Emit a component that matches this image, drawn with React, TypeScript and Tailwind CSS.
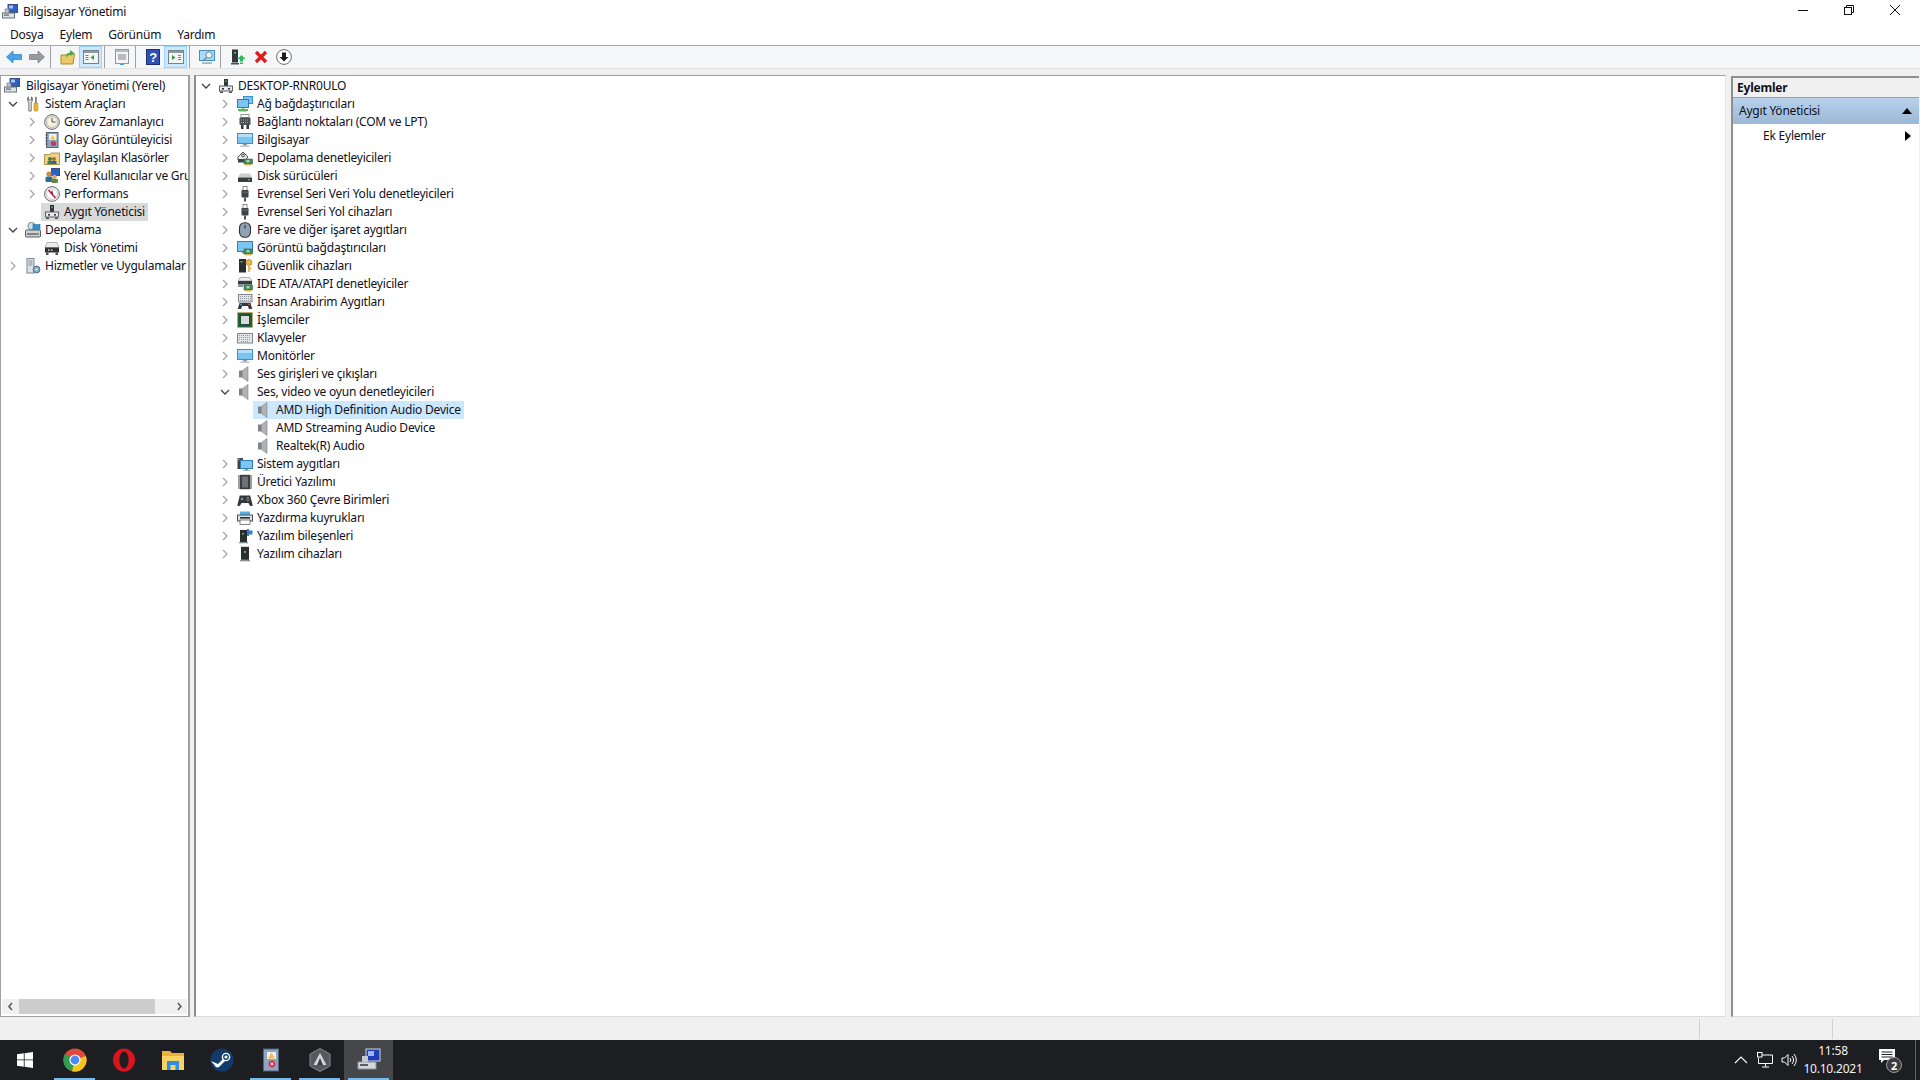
import type { ReactNode } from 'react'

const Ico = ({ children, size = 16 }: { children: ReactNode; size?: number }) => (
  <svg width={size} height={size} viewBox="0 0 16 16" className="shrink-0" shapeRendering="geometricPrecision">
    {children}
  </svg>
)

const Monitor = () => (
  <>
    <rect x="0.5" y="1.5" width="15" height="10" fill="#7cc4f2" stroke="#3f8fc9" />
    <rect x="1" y="2" width="14" height="3" fill="#b5e0fa" />
    <rect x="6" y="12" width="4" height="1.5" fill="#8b98a5" />
    <rect x="3.5" y="13.5" width="9" height="1.2" fill="#aab4bd" />
  </>
)

const Tower = () => (
  <>
    <rect x="6" y="1" width="4" height="7" fill="#33373b" />
    <rect x="7.4" y="2.5" width="1.4" height="1.4" fill="#4bd14b" />
    <rect x="1.5" y="8" width="13" height="5" fill="#e9ebed" stroke="#5c6165" />
    <rect x="4" y="10" width="2" height="1.6" fill="#33373b" />
    <rect x="10" y="10" width="2" height="1.6" fill="#33373b" />
    <rect x="2" y="13.5" width="3" height="1.5" fill="#4b4f53" />
    <rect x="11" y="13.5" width="3" height="1.5" fill="#4b4f53" />
  </>
)

const Card = () => (
  <>
    <rect x="7" y="9" width="8.5" height="5" fill="#3f8a5e" stroke="#2b6a46" strokeWidth="0.6" />
    <rect x="9.5" y="10" width="3" height="2.4" fill="#a8d3b6" />
    <rect x="8" y="14" width="6" height="1.4" fill="#e2b33c" />
  </>
)

const DiskBody = () => (
  <>
    <path d="M3 5.5 L13 5.5 L15 9.5 L1 9.5 Z" fill="#c9ccd0" />
    <rect x="1" y="9.5" width="14" height="4.5" rx="0.6" fill="#3a3d40" />
    <rect x="11" y="11.2" width="2" height="1.2" fill="#4bd14b" />
  </>
)

const Usb = () => (
  <>
    <rect x="6" y="0.5" width="4" height="4" fill="#fff" stroke="#6b7075" strokeWidth="0.8" />
    <rect x="4.5" y="4" width="7" height="7.5" rx="0.8" fill="#3e4246" />
    <rect x="4.5" y="5.5" width="7" height="1.2" fill="#62676c" />
    <rect x="7" y="11.5" width="2" height="4" fill="#4b4f53" />
  </>
)

const Speaker = () => (
  <>
    <rect x="2" y="4.5" width="3.5" height="7" fill="#7f8388" />
    <path d="M5.5 4.5 L11 0.5 L11 15.5 L5.5 11.5 Z" fill="#b0b3b6" stroke="#7d8186" strokeWidth="0.6" />
  </>
)

const Keyboard = () => (
  <>
    <rect x="0.5" y="3.5" width="15" height="9.5" fill="#e4e7ea" stroke="#7f858b" />
    <path d="M2 5.5h12M2 7.5h12M2 9.5h12M4 11.5h8" stroke="#8d939a" strokeWidth="1" strokeDasharray="1 1" />
  </>
)

const icons: Record<string, ReactNode> = {
  mgmt: (
    <>
      <rect x="6" y="0.5" width="9.5" height="8" fill="#2f5fc4" stroke="#3a4f80" />
      <rect x="7" y="1.5" width="4" height="3" fill="#a9c6f4" />
      <rect x="0.5" y="9" width="12" height="5" fill="#dfe2e5" stroke="#6d7277" />
      <rect x="3" y="5" width="4" height="4" fill="#bfc3c8" stroke="#6d7277" strokeWidth="0.6" />
      <rect x="2" y="10.5" width="5" height="1.2" fill="#5a5f64" />
    </>
  ),
  tools: (
    <>
      <path d="M3.5 0.8 V4 H6.5 V0.8 C8 2 8 5 6.2 6.2 V15 H3.8 V6.2 C2 5 2 2 3.5 0.8 Z" fill="#eceef0" stroke="#5f6468" strokeWidth="0.9" />
      <rect x="10" y="0.8" width="1.8" height="6.5" fill="#7d8388" />
      <rect x="9" y="7" width="3.8" height="8" rx="1" fill="#f0b429" stroke="#a97c14" strokeWidth="0.6" />
    </>
  ),
  clock: (
    <>
      <circle cx="8" cy="8" r="7.4" fill="#dfe0e2" stroke="#6d7176" />
      <circle cx="8" cy="8" r="5.4" fill="#f7f1de" stroke="#a9a38f" strokeWidth="0.6" />
      <path d="M8 4 V8 H11.5" fill="none" stroke="#4a4f54" strokeWidth="1" />
    </>
  ),
  log: (
    <>
      <rect x="2.5" y="0.5" width="11.5" height="15" fill="#8fa4bf" stroke="#56657a" />
      <rect x="5" y="2" width="7.5" height="6" fill="#eef1f5" />
      <path d="M8.7 3 L11 7.5 H6.4 Z" fill="#f0c22e" />
      <circle cx="9.5" cy="11.5" r="2.6" fill="#d8344a" />
      <path d="M1.5 3h2M1.5 6h2M1.5 9h2M1.5 12h2" stroke="#3e4246" />
    </>
  ),
  shared: (
    <>
      <path d="M0.5 4.5 H6 L7 3 H15.5 V14.5 H0.5 Z" fill="#ecd38c" stroke="#b39545" />
      <circle cx="6" cy="9" r="2" fill="#3a7f4f" />
      <rect x="3.5" y="11" width="5" height="3" fill="#3a7f4f" />
      <circle cx="10" cy="9" r="2" fill="#b06a32" />
      <rect x="8" y="11" width="4.5" height="3" fill="#2e5fa8" />
    </>
  ),
  users: (
    <>
      <rect x="7.5" y="0.5" width="8" height="7" fill="#2f5fc4" stroke="#3a4f80" />
      <circle cx="5" cy="6" r="2.6" fill="#c98a4a" />
      <rect x="1.5" y="8.5" width="7" height="5.5" rx="1.5" fill="#2f6d92" />
      <circle cx="10.5" cy="9" r="2.3" fill="#e0a86b" />
      <rect x="7.5" y="11" width="6.5" height="4" rx="1.2" fill="#5b8a3c" />
    </>
  ),
  perf: (
    <>
      <circle cx="8" cy="8" r="7.4" fill="#f3f3f3" stroke="#5f6468" />
      <circle cx="8" cy="8" r="5.4" fill="#fff" stroke="#a9adb1" strokeWidth="0.6" />
      <path d="M4.5 4 L11.5 12" stroke="#d9243a" strokeWidth="1.8" />
      <path d="M8 3.5 L6.8 8 L9.2 8 Z" fill="#3e4246" />
    </>
  ),
  tower: <Tower />,
  storage: (
    <>
      <circle cx="6.5" cy="4" r="3.6" fill="#cfe0e8" stroke="#6d8a99" />
      <rect x="8" y="2.5" width="7" height="5" fill="#2f8fd0" stroke="#2a6d9c" strokeWidth="0.6" />
      <rect x="0.5" y="8" width="15" height="7" rx="0.8" fill="#cfd2d5" stroke="#5a5f64" />
      <rect x="2" y="11" width="12" height="2" fill="#7e8388" />
      <rect x="11.5" y="11.4" width="1.6" height="1.1" fill="#4bd14b" />
    </>
  ),
  diskmgmt: (
    <>
      <path d="M3 2.5 H13 L15 7.5 H1 Z" fill="#eceef0" stroke="#7f858b" strokeWidth="0.6" />
      <rect x="1" y="7.5" width="14" height="5" fill="#2f3235" />
      <rect x="4" y="9.5" width="1.5" height="1.2" fill="#fff" />
      <rect x="7" y="9.5" width="1.5" height="1.2" fill="#fff" />
      <rect x="2" y="12.5" width="2.5" height="2.5" fill="#4b4f53" />
      <rect x="11.5" y="12.5" width="2.5" height="2.5" fill="#4b4f53" />
    </>
  ),
  services: (
    <>
      <rect x="2" y="0.5" width="7" height="14.5" fill="#dfe3e8" stroke="#7b8794" />
      <path d="M3.5 3h4M3.5 5h4M3.5 7h4" stroke="#7b8794" />
      <circle cx="11.5" cy="11.5" r="3.4" fill="#7fa9c9" stroke="#45708f" />
      <circle cx="11.5" cy="11.5" r="1.1" fill="#fff" />
    </>
  ),
  network: (
    <>
      <rect x="6.5" y="0.5" width="9" height="7" fill="#7cc4f2" stroke="#3f8fc9" />
      <rect x="0.5" y="3.5" width="11" height="8" fill="#7cc4f2" stroke="#2f7db5" />
      <path d="M6 11.5 L10 15.5 H2 Z" fill="#5cb85c" />
      <rect x="1" y="13" width="10" height="2" fill="#5cb85c" />
    </>
  ),
  port: (
    <>
      <rect x="4" y="0.5" width="8" height="3" fill="#fff" stroke="#6b7075" strokeWidth="0.7" />
      <rect x="2.5" y="3.5" width="11" height="7.5" rx="1" fill="#4b4f53" />
      <path d="M4 6h8M4 8.5h8" stroke="#9ea3a8" strokeDasharray="1 1" />
      <rect x="4" y="11" width="2.5" height="4" fill="#34373a" />
      <rect x="9.5" y="11" width="2.5" height="4" fill="#34373a" />
    </>
  ),
  pc: <Monitor />,
  storagectl: (
    <>
      <path d="M1 7 L6 2 L11 7 L8 10 H1 Z" fill="#eceef0" stroke="#3e4246" strokeWidth="0.9" />
      <circle cx="6" cy="5.5" r="1.4" fill="none" stroke="#3e4246" />
      <rect x="1" y="9" width="6" height="3.5" fill="#3e4246" />
      <Card />
    </>
  ),
  disk: <DiskBody />,
  usb: <Usb />,
  mouse: (
    <>
      <rect x="2.5" y="0.7" width="11" height="14.6" rx="5" fill="#8fa3b5" stroke="#2f3235" strokeWidth="1.1" />
      <rect x="7.3" y="3" width="1.4" height="3.5" rx="0.7" fill="#3e4246" />
    </>
  ),
  display: (
    <>
      <rect x="0.5" y="1.5" width="15" height="10" fill="#7cc4f2" stroke="#2f7db5" />
      <rect x="5" y="12" width="4" height="1.5" fill="#8b98a5" />
      <Card />
    </>
  ),
  security: (
    <>
      <rect x="2" y="1" width="7" height="13.5" fill="#2c2f32" />
      <rect x="3.5" y="3" width="2" height="1.4" fill="#4bd14b" />
      <circle cx="12" cy="4.5" r="3" fill="#e9b949" stroke="#b5872a" strokeWidth="0.7" />
      <rect x="11.2" y="7" width="1.6" height="7" fill="#e0ab38" />
      <rect x="12.8" y="10" width="1.5" height="1.2" fill="#e0ab38" />
    </>
  ),
  ide: (
    <>
      <path d="M3 1.5 H13 L15 5 H1 Z" fill="#eceef0" stroke="#7f858b" strokeWidth="0.6" />
      <rect x="1" y="5" width="14" height="3.5" fill="#3a3d40" />
      <rect x="1" y="8.5" width="5" height="2.5" fill="#8a8f94" />
      <Card />
    </>
  ),
  hid: (
    <>
      <rect x="1.5" y="0.5" width="13.5" height="7.5" fill="#e4e7ea" stroke="#7f858b" />
      <path d="M3 2.5h11M3 4.5h11M3 6.5h11" stroke="#8d939a" strokeDasharray="1 1" />
      <path d="M0.8 15 L2.5 9 H13.5 L15.2 15 H12 L10.8 12 H5.2 L4 15 Z" fill="#34383c" />
      <circle cx="4" cy="10.5" r="0.9" fill="#5aa3e0" />
      <circle cx="12" cy="10.5" r="0.9" fill="#d9534f" />
    </>
  ),
  cpu: (
    <>
      <rect x="0.5" y="0.5" width="15" height="15" fill="#295f3f" stroke="#d7b24a" strokeDasharray="1 1" />
      <rect x="2.5" y="2.5" width="11" height="11" fill="#1f4d32" />
      <rect x="4" y="4" width="8" height="8" fill="#d7dbd9" />
    </>
  ),
  keyboard: <Keyboard />,
  monitor: <Monitor />,
  speaker: <Speaker />,
  system: (
    <>
      <path d="M0.5 2 H6 V5 H0.5 Z" fill="#4b4f53" />
      <rect x="1" y="2.8" width="1.4" height="1.2" fill="#4bd14b" />
      <rect x="0.5" y="5" width="3" height="8" fill="#3e4246" />
      <rect x="3.5" y="4.5" width="12" height="8" fill="#7cc4f2" stroke="#2f7db5" />
      <rect x="8" y="13" width="3" height="1" fill="#8b98a5" />
      <rect x="6" y="14" width="7" height="1" fill="#aab4bd" />
    </>
  ),
  firmware: (
    <>
      <rect x="3" y="0.8" width="10" height="14.4" fill="#3b3e41" />
      <path d="M1 2h2M1 4h2M1 6h2M1 8h2M1 10h2M1 12h2M1 14h2M13 2h2M13 4h2M13 6h2M13 8h2M13 10h2M13 12h2M13 14h2" stroke="#3b3e41" />
      <rect x="5" y="2.5" width="6" height="11" fill="#6d7175" />
    </>
  ),
  gamepad: (
    <>
      <path d="M0.3 13.5 L2.8 3.5 H13.2 L15.7 13.5 C14.2 14.8 12.5 14 11.5 11 H4.5 C3.5 14 1.8 14.8 0.3 13.5 Z" fill="#33373b" />
      <circle cx="5" cy="7" r="1.3" fill="#8a8f94" />
      <circle cx="11" cy="5.8" r="0.8" fill="#e0c040" />
      <circle cx="12.2" cy="7.3" r="0.8" fill="#d9534f" />
      <circle cx="9.8" cy="7.3" r="0.8" fill="#4a90d9" />
      <circle cx="11" cy="8.7" r="0.8" fill="#5cb85c" />
    </>
  ),
  printer: (
    <>
      <rect x="3" y="1.5" width="10" height="3.5" fill="#52b0e6" />
      <rect x="0.5" y="5" width="15" height="6" fill="#dfe2e5" stroke="#4b4f53" />
      <rect x="3" y="7" width="10" height="1.6" fill="#2c2f32" />
      <rect x="3" y="10" width="10" height="4.5" fill="#fff" stroke="#4b4f53" strokeWidth="0.7" />
    </>
  ),
  softcomp: (
    <>
      <rect x="3" y="2" width="7" height="12" fill="#2c2f32" />
      <rect x="5" y="5" width="1.8" height="1.6" fill="#4bd14b" />
      <rect x="2" y="14" width="9" height="1.3" fill="#8a8f94" />
      <path d="M10 1 H12 V2.5 H15.5 V6.5 H12 V8 H10 Z" fill="#2f7fd0" />
    </>
  ),
  softdev: (
    <>
      <rect x="4" y="0.8" width="8" height="13" fill="#2c2f32" />
      <rect x="7" y="5" width="2" height="1.8" fill="#4bd14b" />
      <rect x="3" y="14" width="10" height="1.3" fill="#8a8f94" />
    </>
  ),
}

const Chevron = ({ open }: { open?: boolean }) => (
  <svg width="10" height="10" viewBox="0 0 10 10" className="ml-[5px]">
    {open ? (
      <path d="M1 3 L5 7 L9 3" fill="none" stroke="#404040" strokeWidth="1.3" />
    ) : (
      <path d="M3 1 L7 5 L3 9" fill="none" stroke="#a6a6a6" strokeWidth="1.3" />
    )}
  </svg>
)

type RowProps = {
  label: string
  icon: string
  indent: string
  chevron?: 'open' | 'closed'
  selected?: string
}

function TreeRow({ label, icon, indent, chevron, selected }: RowProps) {
  return (
    <div className={`flex items-center h-[18px] whitespace-nowrap ${indent}`}>
      <div className="w-[22px] shrink-0 flex items-center">
        {chevron && <Chevron open={chevron === 'open'} />}
      </div>
      <div className={`flex items-center h-[18px] -ml-[3px] pl-[3px] pr-[3px] ${selected ?? ''}`}>
        <Ico>{icons[icon]}</Ico>
        <span className="ml-[4px]">{label}</span>
      </div>
    </div>
  )
}

const leftTree: RowProps[] = [
  { label: 'Sistem Araçları', icon: 'tools', indent: 'pl-[2px]', chevron: 'open' },
  { label: 'Görev Zamanlayıcı', icon: 'clock', indent: 'pl-[21px]', chevron: 'closed' },
  { label: 'Olay Görüntüleyicisi', icon: 'log', indent: 'pl-[21px]', chevron: 'closed' },
  { label: 'Paylaşılan Klasörler', icon: 'shared', indent: 'pl-[21px]', chevron: 'closed' },
  { label: 'Yerel Kullanıcılar ve Gruplar', icon: 'users', indent: 'pl-[21px]', chevron: 'closed' },
  { label: 'Performans', icon: 'perf', indent: 'pl-[21px]', chevron: 'closed' },
  { label: 'Aygıt Yöneticisi', icon: 'tower', indent: 'pl-[21px]', selected: 'bg-[#d9d9d9]' },
  { label: 'Depolama', icon: 'storage', indent: 'pl-[2px]', chevron: 'open' },
  { label: 'Disk Yönetimi', icon: 'diskmgmt', indent: 'pl-[21px]' },
  { label: 'Hizmetler ve Uygulamalar', icon: 'services', indent: 'pl-[2px]', chevron: 'closed' },
]

const d1 = 'pl-[19px]'
const d2 = 'pl-[38px]'

const deviceTree: RowProps[] = [
  { label: 'DESKTOP-RNR0ULO', icon: 'tower', indent: 'pl-[0px]', chevron: 'open' },
  { label: 'Ağ bağdaştırıcıları', icon: 'network', indent: d1, chevron: 'closed' },
  { label: 'Bağlantı noktaları (COM ve LPT)', icon: 'port', indent: d1, chevron: 'closed' },
  { label: 'Bilgisayar', icon: 'pc', indent: d1, chevron: 'closed' },
  { label: 'Depolama denetleyicileri', icon: 'storagectl', indent: d1, chevron: 'closed' },
  { label: 'Disk sürücüleri', icon: 'disk', indent: d1, chevron: 'closed' },
  { label: 'Evrensel Seri Veri Yolu denetleyicileri', icon: 'usb', indent: d1, chevron: 'closed' },
  { label: 'Evrensel Seri Yol cihazları', icon: 'usb', indent: d1, chevron: 'closed' },
  { label: 'Fare ve diğer işaret aygıtları', icon: 'mouse', indent: d1, chevron: 'closed' },
  { label: 'Görüntü bağdaştırıcıları', icon: 'display', indent: d1, chevron: 'closed' },
  { label: 'Güvenlik cihazları', icon: 'security', indent: d1, chevron: 'closed' },
  { label: 'IDE ATA/ATAPI denetleyiciler', icon: 'ide', indent: d1, chevron: 'closed' },
  { label: 'İnsan Arabirim Aygıtları', icon: 'hid', indent: d1, chevron: 'closed' },
  { label: 'İşlemciler', icon: 'cpu', indent: d1, chevron: 'closed' },
  { label: 'Klavyeler', icon: 'keyboard', indent: d1, chevron: 'closed' },
  { label: 'Monitörler', icon: 'monitor', indent: d1, chevron: 'closed' },
  { label: 'Ses girişleri ve çıkışları', icon: 'speaker', indent: d1, chevron: 'closed' },
  { label: 'Ses, video ve oyun denetleyicileri', icon: 'speaker', indent: d1, chevron: 'open' },
  { label: 'AMD High Definition Audio Device', icon: 'speaker', indent: d2, selected: 'bg-[#cce8ff]' },
  { label: 'AMD Streaming Audio Device', icon: 'speaker', indent: d2 },
  { label: 'Realtek(R) Audio', icon: 'speaker', indent: d2 },
  { label: 'Sistem aygıtları', icon: 'system', indent: d1, chevron: 'closed' },
  { label: 'Üretici Yazılımı', icon: 'firmware', indent: d1, chevron: 'closed' },
  { label: 'Xbox 360 Çevre Birimleri', icon: 'gamepad', indent: d1, chevron: 'closed' },
  { label: 'Yazdırma kuyrukları', icon: 'printer', indent: d1, chevron: 'closed' },
  { label: 'Yazılım bileşenleri', icon: 'softcomp', indent: d1, chevron: 'closed' },
  { label: 'Yazılım cihazları', icon: 'softdev', indent: d1, chevron: 'closed' },
]

const ToolBtn = ({ children, active }: { children: ReactNode; active?: boolean }) => (
  <div
    className={`w-[23px] h-[22px] flex items-center justify-center ${
      active ? 'bg-[#cce8ff] border border-[#99d1ff]' : ''
    }`}
  >
    {children}
  </div>
)

const ToolSep = () => (
  <div className="w-[8px] h-[22px] pl-[2px]">
    <div className="w-px h-full bg-[#a0a0a0]" />
  </div>
)

const WindowPane = ({ arrow }: { arrow: 'left' | 'right' }) => (
  <svg width="16" height="16" viewBox="0 0 16 16">
    <rect x="0.5" y="1.5" width="15" height="13" fill="#f4f4f4" stroke="#77818a" />
    <rect x="1" y="2" width="14" height="2" fill="#8e99a3" />
    {arrow === 'left' ? (
      <>
        <rect x="2.5" y="6" width="3" height="1" fill="#77818a" />
        <rect x="2.5" y="8" width="3" height="1" fill="#77818a" />
        <rect x="2.5" y="10" width="3" height="1" fill="#77818a" />
        <path d="M11 6 L7.5 8.5 L11 11 Z" fill="#2ea043" />
      </>
    ) : (
      <>
        <path d="M4 6 L7.5 8.5 L4 11 Z" fill="#2ea043" />
        <rect x="10" y="6" width="3" height="1" fill="#77818a" />
        <rect x="10" y="8" width="3" height="1" fill="#77818a" />
        <rect x="10" y="10" width="3" height="1" fill="#77818a" />
      </>
    )}
  </svg>
)

function Toolbar() {
  return (
    <div className="h-[23px] flex items-end pl-[2px] bg-[#f5f6f7] border-b border-[#e3e3e3] shrink-0">
      <ToolBtn>
        <svg width="16" height="14" viewBox="0 0 16 14">
          <path d="M0.5 7 L7 1 V4.5 H15.5 V9.5 H7 V13 Z" fill="#4aa3e8" stroke="#2c7cc0" strokeWidth="0.7" />
        </svg>
      </ToolBtn>
      <ToolBtn>
        <svg width="16" height="14" viewBox="0 0 16 14">
          <path d="M15.5 7 L9 1 V4.5 H0.5 V9.5 H9 V13 Z" fill="#9a9a9a" stroke="#777" strokeWidth="0.7" />
        </svg>
      </ToolBtn>
      <ToolSep />
      <ToolBtn>
        <svg width="16" height="16" viewBox="0 0 16 16">
          <path d="M1 6 H6 L7 5 H14.5 L13 15 H1 Z" fill="#ecc869" stroke="#a98b33" />
          <path d="M6 9 C6 5 8 4 10 3.5 V1 L14.5 4 L10 7 V5.5 C8.5 6 7 7 6 9 Z" fill="#3fae49" />
        </svg>
      </ToolBtn>
      <ToolBtn active>
        <WindowPane arrow="left" />
      </ToolBtn>
      <ToolSep />
      <ToolBtn>
        <svg width="16" height="16" viewBox="0 0 16 16">
          <rect x="1.5" y="0.5" width="13" height="14" fill="#f4f4f4" stroke="#8e99a3" />
          <rect x="2" y="1" width="12" height="2" fill="#b6bdc4" />
          <path d="M4 6h8M4 8h8M4 10h8" stroke="#77818a" />
          <rect x="6" y="15" width="4" height="1" fill="#3aa0e0" />
        </svg>
      </ToolBtn>
      <ToolSep />
      <ToolBtn>
        <svg width="14" height="16" viewBox="0 0 14 16">
          <rect x="0.5" y="0.5" width="13" height="15" fill="#2f4fb5" stroke="#1d2f78" />
          <text x="7" y="13" textAnchor="middle" fontSize="13" fontWeight="700" fill="#ffffff" fontFamily="Liberation Sans, sans-serif">?</text>
        </svg>
      </ToolBtn>
      <ToolBtn active>
        <WindowPane arrow="right" />
      </ToolBtn>
      <ToolSep />
      <ToolBtn>
        <svg width="16" height="16" viewBox="0 0 16 16">
          <rect x="0.5" y="1.5" width="15" height="10" fill="#a9dcf8" stroke="#3f8fc9" />
          <circle cx="10" cy="6" r="3.2" fill="#e8f6fd" stroke="#77818a" />
          <path d="M7.5 8.5 L4 12" stroke="#77818a" strokeWidth="1.3" />
          <rect x="3" y="13.5" width="10" height="1.2" fill="#8b98a5" />
        </svg>
      </ToolBtn>
      <ToolSep />
      <ToolBtn>
        <svg width="16" height="16" viewBox="0 0 16 16">
          <rect x="2" y="0.5" width="6" height="13" fill="#33373b" />
          <rect x="4" y="3" width="2" height="1.6" fill="#4bd14b" />
          <rect x="1" y="14" width="8" height="1.5" fill="#4b4f53" />
          <path d="M11.5 6 L15.5 10 H13 V12.5 H10 V10 H7.5 Z" fill="#2eb85c" />
          <rect x="10" y="13.5" width="3" height="1.5" fill="#2eb85c" />
        </svg>
      </ToolBtn>
      <ToolBtn>
        <svg width="14" height="14" viewBox="0 0 14 14">
          <path d="M2 2 L12 12 M12 2 L2 12" stroke="#dd1c1c" strokeWidth="3.2" />
        </svg>
      </ToolBtn>
      <ToolBtn>
        <svg width="16" height="16" viewBox="0 0 16 16">
          <circle cx="8" cy="8" r="7.4" fill="#ffffff" stroke="#6b6b6b" />
          <path d="M6 3.5 H10 V8 H12.5 L8 12.5 L3.5 8 H6 Z" fill="#1c1c1c" />
        </svg>
      </ToolBtn>
    </div>
  )
}

function LeftPane() {
  return (
    <div className="w-[190px] shrink-0 flex flex-col bg-white border border-r-2 border-[#a0a0a0] overflow-hidden">
      <div className="flex-1 pt-[1px] min-h-0 overflow-hidden">
        <div className="flex items-center h-[18px] pl-[3px] whitespace-nowrap">
          <Ico>{icons.mgmt}</Ico>
          <span className="ml-[6px]">Bilgisayar Yönetimi (Yerel)</span>
        </div>
        {leftTree.map((r) => (
          <TreeRow key={r.label} {...r} />
        ))}
      </div>
      <div className="h-[15px] mb-[2px] mx-[1px] flex items-center bg-[#f0f0f0] shrink-0">
        <svg width="17" height="15" viewBox="0 0 17 15">
          <path d="M10 4 L7 7.5 L10 11" fill="none" stroke="#5a5a5a" strokeWidth="1.6" />
        </svg>
        <div className="w-[137px] h-full bg-[#cdcdcd]" />
        <svg width="32" height="15" viewBox="0 0 32 15">
          <path d="M23 4 L26 7.5 L23 11" fill="none" stroke="#5a5a5a" strokeWidth="1.6" />
        </svg>
      </div>
    </div>
  )
}

function DevicePane() {
  return (
    <div className="ml-[4px] w-[1532px] shrink-0 bg-white border-l-2 border-l-[#8f8f8f] border-t border-t-[#a0a0a0] border-r border-r-[#e3e3e3] border-b border-b-[#dcdcdc] pt-[1px] overflow-hidden">
      {deviceTree.map((r, i) => (
        <TreeRow key={i} {...r} />
      ))}
    </div>
  )
}

function ActionsPane() {
  return (
    <div className="ml-[5px] mt-[1px] flex-1 mr-[1px] bg-white border-l-2 border-l-[#8f8f8f] border-t-2 border-t-[#8f8f8f] border-b border-b-[#dcdcdc]">
      <div className="h-[20px] bg-[#f0f0f0] border-b border-[#a0a0a0] flex items-center pl-[4px] font-bold">
        Eylemler
      </div>
      <div className="h-[26px] bg-gradient-to-b from-[#b9d1ea] to-[#9bb8d6] flex items-center justify-between pl-[6px] pr-[7px]">
        <span>Aygıt Yöneticisi</span>
        <svg width="10" height="6" viewBox="0 0 10 6">
          <path d="M0 6 L5 0 L10 6 Z" fill="#000000" />
        </svg>
      </div>
      <div className="h-[24px] flex items-center justify-between pl-[30px] pr-[8px]">
        <span>Ek Eylemler</span>
        <svg width="6" height="10" viewBox="0 0 6 10">
          <path d="M0 0 L6 5 L0 10 Z" fill="#000000" />
        </svg>
      </div>
    </div>
  )
}

const TaskItem = ({ children, open, active }: { children: ReactNode; open?: boolean; active?: boolean }) => (
  <div className={`w-[49px] h-[40px] flex items-center justify-center relative ${active ? 'bg-[#45474a]' : ''}`}>
    {children}
    {open && <div className="absolute bottom-0 left-[4px] right-[4px] h-[2px] bg-[#76b9ed]" />}
  </div>
)

function Taskbar() {
  return (
    <div className="h-[40px] bg-[#1c1e22] flex items-center text-white shrink-0">
      <div className="w-[50px] h-full flex items-center justify-center">
        <svg width="16" height="16" viewBox="0 0 16 16">
          <path d="M0 2.3 L6.8 1.3 V7.5 H0 Z M7.6 1.2 L16 0 V7.5 H7.6 Z M0 8.3 H6.8 V14.7 L0 13.7 Z M7.6 8.3 H16 V16 L7.6 14.8 Z" fill="#ffffff" />
        </svg>
      </div>
      <TaskItem open>
        <svg width="24" height="24" viewBox="0 0 24 24">
          <circle cx="12" cy="12" r="11.5" fill="#dd4b3e" />
          <path d="M12 12 L2 6 A11.5 11.5 0 0 0 9 23.2 Z" fill="#2f9e4f" />
          <path d="M12 12 L22.8 8 A11.5 11.5 0 0 1 9 23.2 Z" fill="#f5c518" />
          <circle cx="12" cy="12" r="5.6" fill="#ffffff" />
          <circle cx="12" cy="12" r="4.4" fill="#4a8af4" />
        </svg>
      </TaskItem>
      <TaskItem>
        <svg width="24" height="24" viewBox="0 0 24 24">
          <ellipse cx="12" cy="12" rx="11" ry="11.5" fill="#d8141f" />
          <ellipse cx="12" cy="12" rx="4.6" ry="8.6" fill="#1c1e22" />
        </svg>
      </TaskItem>
      <TaskItem>
        <svg width="24" height="22" viewBox="0 0 24 22">
          <path d="M1 2 H9 L11 4 H23 V21 H1 Z" fill="#e8b23a" />
          <rect x="1" y="7" width="22" height="14" fill="#f6d365" />
          <path d="M6 12 H18 V21 H14.5 V16 H9.5 V21 H6 Z" fill="#2f8fe0" />
        </svg>
      </TaskItem>
      <TaskItem>
        <svg width="24" height="24" viewBox="0 0 24 24">
          <circle cx="12" cy="12" r="11.5" fill="#123a6b" />
          <circle cx="16" cy="9" r="3.6" fill="none" stroke="#ffffff" strokeWidth="1.4" />
          <circle cx="16" cy="9" r="1.6" fill="#ffffff" />
          <path d="M0.8 13 L8 16 L13 11 L15 13 L10 18 A3 3 0 0 1 4.5 17 Z" fill="#ffffff" />
        </svg>
      </TaskItem>
      <TaskItem open>
        <svg width="18" height="24" viewBox="0 0 18 24">
          <rect x="1.5" y="1" width="15" height="22" fill="#8fa4c4" stroke="#56657a" />
          <rect x="5" y="4" width="9" height="7" fill="#eef1f5" />
          <path d="M9.5 4.5 L13 10.5 H6 Z" fill="#f0c22e" />
          <circle cx="10" cy="16" r="3.4" fill="#d8344a" />
          <path d="M8.6 14.6 L11.4 17.4 M11.4 14.6 L8.6 17.4" stroke="#fff" />
        </svg>
      </TaskItem>
      <TaskItem open>
        <svg width="22" height="24" viewBox="0 0 22 24">
          <path d="M11 0.5 L21 6 V18 L11 23.5 L1 18 V6 Z" fill="#55585c" stroke="#85888b" />
          <path d="M11 5 L17.5 17 H4.5 Z" fill="#d4d6d8" />
          <path d="M11 10 L14 17 H8 Z" fill="#3a3d41" />
        </svg>
      </TaskItem>
      <TaskItem open active>
        <svg width="24" height="24" viewBox="0 0 24 24">
          <rect x="9" y="1" width="14" height="12" fill="#1f3fb8" stroke="#cfd6e0" />
          <rect x="11" y="3" width="6" height="5" fill="#9db8f0" />
          <rect x="1" y="14" width="18" height="7" fill="#d5d9dc" stroke="#8d9296" />
          <rect x="5" y="8" width="6" height="6" fill="#c3c8cc" />
          <rect x="3" y="16" width="8" height="2" fill="#5a5f64" />
        </svg>
      </TaskItem>
      <div className="flex-1" />
      <div className="flex items-center h-full">
        <svg width="14" height="8" viewBox="0 0 14 8" className="mr-[9px]">
          <path d="M1 7 L7 1 L13 7" fill="none" stroke="#ffffff" strokeWidth="1.1" />
        </svg>
        <svg width="16" height="16" viewBox="0 0 16 16" className="mr-[8px]">
          <path d="M5 3 H15.5 V11.5 H1.5 V6" fill="none" stroke="#ffffff" />
          <rect x="0.5" y="0.5" width="4.5" height="4.5" fill="none" stroke="#ffffff" />
          <path d="M8.5 11.5 V14.5 M5 15 H12" stroke="#ffffff" />
        </svg>
        <svg width="16" height="16" viewBox="0 0 16 16" className="mr-[1px]">
          <path d="M1 6 H3.5 L7 2.5 V13.5 L3.5 10 H1 Z" fill="none" stroke="#ffffff" />
          <path d="M9 6 A3 3 0 0 1 9 10 M11 4 A6 6 0 0 1 11 12 M13 2 A9 9 0 0 1 13 14" fill="none" stroke="#ffffff" />
        </svg>
        <div className="w-[70px] text-center leading-[18px] text-[#f2f2f2]">
          <div>11:58</div>
          <div>10.10.2021</div>
        </div>
        <div className="relative ml-[11px] mr-[14px] w-[22px] h-[22px]">
          <svg width="16" height="16" viewBox="0 0 16 16" className="absolute left-[0px] top-[0px]">
            <path d="M0 0 H16 V11 H5 L2 14 V11 H0 Z" fill="#ffffff" />
            <path d="M2.5 3h11M2.5 5.5h11M2.5 8h11" stroke="#1c1e22" />
          </svg>
          <div className="absolute left-[7px] top-[8px] w-[16px] h-[16px] rounded-full bg-[#3a3c40] border border-[#9a9a9a] flex items-center justify-center text-[11px] font-bold leading-none">
            2
          </div>
        </div>
        <div className="w-px h-full bg-[#5f6165]" />
        <div className="w-[4px]" />
      </div>
    </div>
  )
}

export default function App() {
  return (
    <div
      className="w-[1920px] h-[1080px] flex flex-col overflow-hidden bg-[#f0f0f0] text-[12px] leading-[16px] tracking-[-0.22px] text-[#10101c]"
      style={{ fontFamily: '"Noto Sans", "Open Sans", sans-serif' }}
    >
      <div className="h-[24px] bg-white flex items-center pl-[2px] shrink-0">
        <Ico>{icons.mgmt}</Ico>
        <span className="ml-[5px]">Bilgisayar Yönetimi</span>
        <div className="flex-1" />
        <div className="flex items-center pr-[2px] self-start">
          <div className="w-[46px] h-[20px] flex items-center justify-center">
            <svg width="10" height="10" viewBox="0 0 10 10"><path d="M0 5.5 H10" stroke="#111" /></svg>
          </div>
          <div className="w-[46px] h-[20px] flex items-center justify-center">
            <svg width="10" height="10" viewBox="0 0 10 10">
              <rect x="0.5" y="2.5" width="7" height="7" fill="none" stroke="#111" />
              <path d="M2.5 2.5 V0.5 H9.5 V7.5 H7.5" fill="none" stroke="#111" />
            </svg>
          </div>
          <div className="w-[46px] h-[20px] flex items-center justify-center">
            <svg width="10" height="10" viewBox="0 0 10 10"><path d="M0 0 L10 10 M10 0 L0 10" stroke="#111" /></svg>
          </div>
        </div>
      </div>
      <div className="h-[22px] bg-white flex items-center pl-[10px] gap-[16px] border-b border-[#ababab] shrink-0">
        <span>Dosya</span>
        <span>Eylem</span>
        <span>Görünüm</span>
        <span>Yardım</span>
      </div>
      <Toolbar />
      <div className="flex-1 min-h-0 flex pt-[6px]">
        <LeftPane />
        <DevicePane />
        <ActionsPane />
      </div>
      <div className="h-[23px] shrink-0 flex items-center">
        <div className="w-[1699px]" />
        <div className="w-px h-[20px] bg-[#d0d0d0]" />
        <div className="w-[132px]" />
        <div className="w-px h-[20px] bg-[#d0d0d0]" />
      </div>
      <Taskbar />
    </div>
  )
}
